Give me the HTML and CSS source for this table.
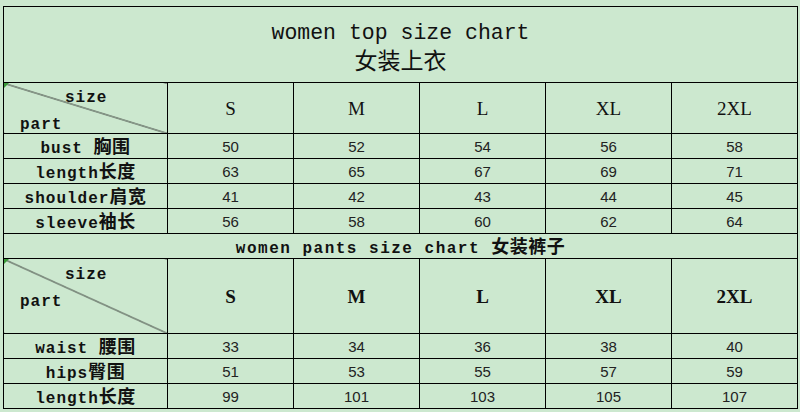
FILE: index.html
```html
<!DOCTYPE html>
<html lang="en">
<head>
<meta charset="utf-8">
<title>women size chart</title>
<link rel="stylesheet" href="styles.css">
</head>
<body>
<table class="chart">
  <colgroup>
    <col class="c-label"><col class="c-size"><col class="c-size"><col class="c-size"><col class="c-size"><col class="c-size">
  </colgroup>
  <tr class="r-title">
    <td colspan="6" class="title">
      <div class="title-en">women top size chart</div>
      <div class="title-cn">女装上衣</div>
    </td>
  </tr>
  <tr class="r-head">
    <td class="diag top-diag"><div class="diag-in"><span class="d-size">size</span><span class="d-part">part</span></div></td>
    <td class="hd">S</td><td class="hd">M</td><td class="hd">L</td><td class="hd">XL</td><td class="hd">2XL</td>
  </tr>
  <tr class="r-data"><td class="lbl">bust <span class="cn">胸围</span></td><td>50</td><td>52</td><td>54</td><td>56</td><td>58</td></tr>
  <tr class="r-data"><td class="lbl">length<span class="cn">长度</span></td><td>63</td><td>65</td><td>67</td><td>69</td><td>71</td></tr>
  <tr class="r-data"><td class="lbl">shoulder<span class="cn">肩宽</span></td><td>41</td><td>42</td><td>43</td><td>44</td><td>45</td></tr>
  <tr class="r-data"><td class="lbl">sleeve<span class="cn">袖长</span></td><td>56</td><td>58</td><td>60</td><td>62</td><td>64</td></tr>
  <tr class="r-sub">
    <td colspan="6" class="sub">women pants size chart <span class="cn">女装裤子</span></td>
  </tr>
  <tr class="r-head2">
    <td class="diag pants-diag"><div class="diag-in"><span class="d-size">size</span><span class="d-part">part</span></div></td>
    <td class="hd2">S</td><td class="hd2">M</td><td class="hd2">L</td><td class="hd2">XL</td><td class="hd2">2XL</td>
  </tr>
  <tr class="r-data"><td class="lbl">waist <span class="cn">腰围</span></td><td>33</td><td>34</td><td>36</td><td>38</td><td>40</td></tr>
  <tr class="r-data"><td class="lbl">hips<span class="cn">臀围</span></td><td>51</td><td>53</td><td>55</td><td>57</td><td>59</td></tr>
  <tr class="r-data"><td class="lbl">length<span class="cn">长度</span></td><td>99</td><td>101</td><td>103</td><td>105</td><td>107</td></tr>
</table>
</body>
</html>
```
FILE: styles.css
```css
html, body {
  margin: 0;
  padding: 0;
  background: #cce8cf;
  width: 800px;
  height: 412px;
  overflow: hidden;
}
body {
  padding: 6px 0 0 3px;
  box-sizing: border-box;
  font-family: "Liberation Sans", Arial, sans-serif;
  color: #111;
}
.chart {
  border-collapse: collapse;
  table-layout: fixed;
  width: 795px;
}
.c-label { width: 164px; }
.c-size { width: 126px; }
.chart td {
  border: 1px solid #000;
  padding: 0;
  text-align: center;
  vertical-align: middle;
  font-family: "Liberation Sans Narrow", "Liberation Sans", Arial, sans-serif;
  font-size: 15px;
  color: #222;
  line-height: 1;
}
.r-title td { height: 76px; }
.r-head td { height: 49px; }
.r-data td { height: 24px; }
.r-sub td { height: 24px; }
.r-head2 td { height: 74px; }

.chart td.title { padding-top: 6px; box-sizing: border-box; }
.title-en {
  font-family: "Liberation Mono", "Courier New", monospace;
  font-size: 21.5px;
  line-height: 24px;
  color: #111;
}
.title-cn {
  font-family: "Noto Sans CJK SC", sans-serif;
  font-size: 23px;
  line-height: 29px;
  color: #111;
}
.chart td.hd {
  font-family: "Liberation Serif", "Times New Roman", serif;
  font-size: 19px;
  color: #111;
}
.chart td.hd2 {
  font-family: "Liberation Serif", "Times New Roman", serif;
  font-size: 19px;
  font-weight: bold;
  color: #111;
}
.chart td.lbl, .chart td.sub {
  font-family: "Liberation Mono", "Courier New", monospace;
  font-weight: bold;
  font-size: 16px;
  letter-spacing: 1px;
  color: #111;
}
.chart td.sub { letter-spacing: 1.5px; }
.cn {
  font-family: "Noto Sans CJK SC", sans-serif;
  font-size: 18px;
  font-weight: bold;
  letter-spacing: 0.5px;
}
.diag {
  position: relative;
  background: linear-gradient(to top right, transparent calc(50% - 0.8px), #222 50%, transparent calc(50% + 0.8px));
}
.diag::before {
  content: "";
  position: absolute;
  left: 0;
  top: 0;
  border-top: 5px solid #3a9a3a;
  border-right: 5px solid transparent;
}
.chart td.diag { vertical-align: top; }
.diag-in {
  display: flex;
  flex-direction: column;
  font-family: "Liberation Mono", "Courier New", monospace;
  font-weight: bold;
  font-size: 16px;
  letter-spacing: 1px;
  color: #111;
  text-align: left;
  gap: 11px;
}
.top-diag .diag-in { padding-top: 7px; }
.pants-diag .diag-in { padding-top: 8px; }
.d-size { padding-left: 61px; }
.d-part { padding-left: 16px; }
```
